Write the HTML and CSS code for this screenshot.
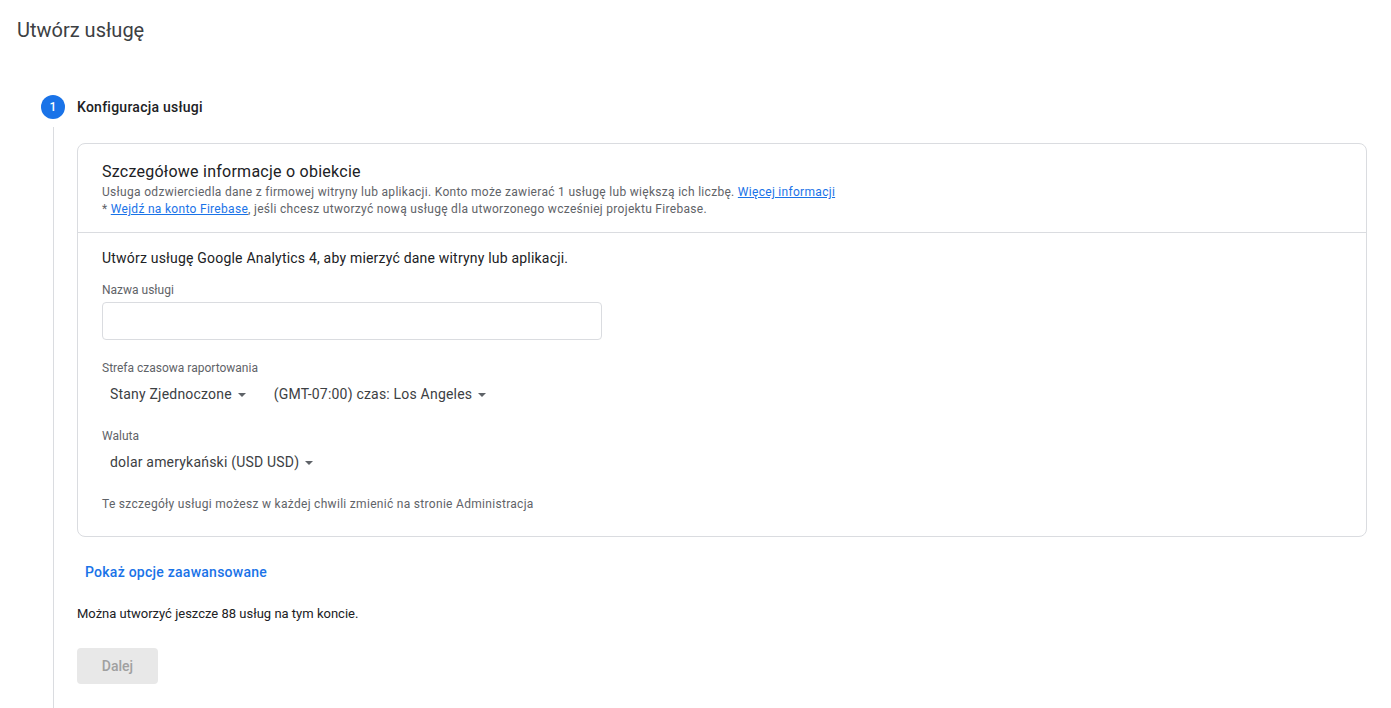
FILE: index.html
```html
<!DOCTYPE html>
<html lang="pl">
<head>
<meta charset="utf-8">
<title>Utwórz usługę</title>
<link rel="stylesheet" href="styles.css">
</head>
<body>
<div class="page">
  <h1 class="page-title">Utwórz usługę</h1>
  <div class="stepper">
    <div class="step-header">
      <div class="step-num">1</div>
      <div class="step-label">Konfiguracja usługi</div>
    </div>
    <div class="step-content">
      <div class="card">
        <div class="card-head">
          <div class="card-title">Szczegółowe informacje o obiekcie</div>
          <div class="card-sub">Usługa odzwierciedla dane z firmowej witryny lub aplikacji. Konto może zawierać 1 usługę lub większą ich liczbę. <a class="link" href="#">Więcej informacji</a></div>
          <div class="card-sub">* <a class="link" href="#">Wejdź na konto Firebase</a>, jeśli chcesz utworzyć nową usługę dla utworzonego wcześniej projektu Firebase.</div>
        </div>
        <div class="card-body">
          <div class="intro">Utwórz usługę Google Analytics 4, aby mierzyć dane witryny lub aplikacji.</div>
          <div class="field-label first">Nazwa usługi</div>
          <div class="input"></div>
          <div class="field-label tz">Strefa czasowa raportowania</div>
          <div class="select-row">
            <div class="select">Stany Zjednoczone<span class="caret"></span></div>
            <div class="select">(GMT-07:00) czas: Los Angeles<span class="caret"></span></div>
          </div>
          <div class="field-label">Waluta</div>
          <div class="select-row">
            <div class="select">dolar amerykański (USD USD)<span class="caret"></span></div>
          </div>
          <div class="note">Te szczegóły usługi możesz w każdej chwili zmienić na stronie Administracja</div>
        </div>
      </div>
      <div class="adv">Pokaż opcje zaawansowane</div>
      <div class="remaining">Można utworzyć jeszcze 88 usług na tym koncie.</div>
      <div class="next">Dalej</div>
    </div>
  </div>
</div>
</body>
</html>
```

FILE: styles.css
```css
html, body {
  margin: 0;
  padding: 0;
  background: #fff;
  height: 100%;
}
body {
  font-family: Roboto, "Noto Sans", Arial, sans-serif;
  color: #202124;
  overflow: hidden;
}
.page {
  padding: 0 24px 0 17px;
  height: 100%;
  display: flex;
  flex-direction: column;
}
.page-title {
  margin: 0;
  padding-top: 18px;
  font-size: 20px;
  line-height: 24px;
  font-weight: 400;
  color: #3c4043;
}
.stepper {
  margin-top: 53px;
  margin-left: 24px;
  flex: 1;
  display: flex;
  flex-direction: column;
}
.step-header {
  display: flex;
  align-items: center;
  gap: 12px;
  height: 24px;
}
.step-num {
  width: 24px;
  height: 24px;
  border-radius: 50%;
  background: #1a73e8;
  color: #fff;
  font-size: 12px;
  font-weight: 500;
  display: flex;
  align-items: center;
  justify-content: center;
}
.step-label {
  font-size: 14px;
  font-weight: 500;
  letter-spacing: 0.25px;
  color: #202124;
}
.step-content {
  margin-top: 8px;
  margin-left: 12px;
  border-left: 1px solid #dadce0;
  padding-left: 23px;
  padding-top: 16px;
  flex: 1;
}
.card {
  border: 1px solid #dadce0;
  border-radius: 8px;
}
.card-head {
  padding: 16px 24px 14px;
  border-bottom: 1px solid #dadce0;
}
.card-title {
  font-size: 16px;
  line-height: 24px;
  letter-spacing: 0.25px;
  color: #202124;
}
.card-sub {
  font-size: 12px;
  line-height: 17px;
  color: #5f6368;
  letter-spacing: 0.3px;
}
.link {
  color: #1a73e8;
  text-decoration: underline;
}
.card-body {
  padding: 15px 24px 24px;
}
.intro {
  font-size: 14px;
  line-height: 20px;
  letter-spacing: 0.2px;
  color: #202124;
}
.field-label {
  font-size: 12px;
  line-height: 16px;
  color: #5f6368;
  margin-top: 16px;
}
.field-label.first {
  margin-top: 14px;
}
.field-label.tz {
  margin-top: 20px;
}
.input {
  margin-top: 4px;
  width: 498px;
  height: 36px;
  border: 1px solid #dadce0;
  border-radius: 4px;
}
.select-row {
  display: flex;
  gap: 12px;
}
.select {
  height: 36px;
  display: flex;
  align-items: center;
  padding: 0 8px;
  font-size: 14px;
  letter-spacing: 0.2px;
  color: #3c4043;
}
.caret {
  margin-left: 6px;
  width: 0;
  height: 0;
  border-left: 4px solid transparent;
  border-right: 4px solid transparent;
  border-top: 4px solid #5f6368;
  margin-top: 2px;
}
.note {
  margin-top: 16px;
  font-size: 12px;
  line-height: 16px;
  letter-spacing: 0.3px;
  color: #5f6368;
}
.adv {
  margin-top: 17px;
  display: inline-flex;
  align-items: center;
  height: 36px;
  padding: 0 8px;
  font-size: 14px;
  font-weight: 500;
  letter-spacing: 0.25px;
  color: #1a73e8;
}
.remaining {
  margin-top: 16px;
  font-size: 13px;
  line-height: 16px;
  color: #202124;
}
.next {
  margin-top: 26px;
  display: inline-flex;
  align-items: center;
  justify-content: center;
  height: 36px;
  width: 81px;
  border-radius: 4px;
  background: #e8e8e8;
  color: #a0a0a0;
  font-size: 14px;
  font-weight: 500;
}
```
